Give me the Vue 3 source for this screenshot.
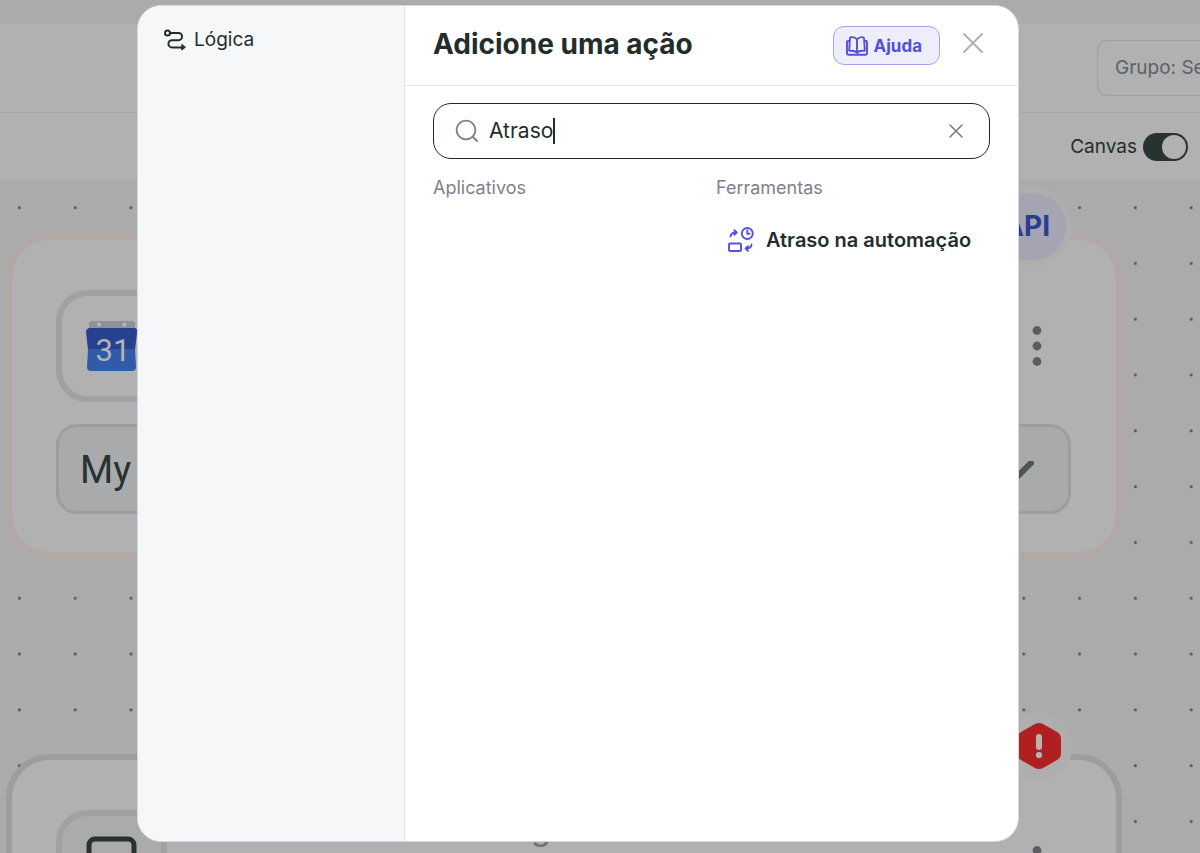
<template>
  <div class="screen">
    <div class="page">
      <header class="page-header">
        <button type="button" class="group-button">Grupo: Se</button>
      </header>

      <div class="toolbar">
        <label class="toggle">
          Canvas
          <input v-model="canvasMode" type="checkbox" class="switch" />
        </label>
      </div>

      <main class="canvas">
        <svg class="dots" aria-hidden="true">
          <defs>
            <pattern id="dots" width="55.8" height="55.8" patternUnits="userSpaceOnUse">
              <circle cx="19.4" cy="27.6" r="1.5" fill="#4e535c" />
            </pattern>
          </defs>
          <rect width="100%" height="100%" fill="url(#dots)" />
        </svg>

        <section class="node node-api">
          <span class="badge-api">API</span>
          <div class="node-head">
            <div class="node-icon">
              <svg width="52" height="52" viewBox="0 0 52 52">
                <path d="M3 8V4q0-3 3-3h40q3 0 3 3v4z" fill="#8f9198" />
                <circle cx="13" cy="4.500" r="2" fill="#b9b9b9" />
                <circle cx="38.500" cy="4.500" r="2" fill="#b9b9b9" />
                <path d="M3 8h46q3 1 2 5l-2 17H2L0 12q0-3 3-4z" fill="#28418f" />
                <path d="M2 29h47l1 18q0 4-4 4H5q-4 0-4-4z" fill="#305ba9" />
                <text x="27" y="41" text-anchor="middle" class="calendar-day">31</text>
              </svg>
            </div>
            <button type="button" class="menu" aria-label="Opções">
              <svg width="10" height="40" viewBox="0 0 10 40" fill="#5a5e62">
                <circle cx="5" cy="4.500" r="4.400" />
                <circle cx="5" cy="20" r="4.400" />
                <circle cx="5" cy="35.500" r="4.400" />
              </svg>
            </button>
          </div>
          <button type="button" class="account">
            <span>My</span>
            <svg width="32" height="18" viewBox="0 0 32 18">
              <path d="M3 2l13 13L29 2" fill="none" stroke="#4f5457" stroke-width="6" stroke-linecap="round" stroke-linejoin="round" />
            </svg>
          </button>
        </section>

        <section class="node node-alert">
          <span class="badge-alert">
            <svg width="44" height="48" viewBox="0 0 44 48">
              <path d="M18 2q4-2 8 0l14 8q4 2 4 7v14q0 5-4 7l-14 8q-4 2-8 0L4 38q-4-2-4-7V17q0-5 4-7z" fill="#b02020" />
              <rect x="19" y="12" width="6" height="16" rx="3" fill="#b9b3b3" />
              <circle cx="22" cy="33" r="3.100" fill="#b9b3b3" />
            </svg>
          </span>
          <div class="node-head">
            <div class="node-icon filled">
              <svg width="52" height="60" viewBox="0 0 52 60">
                <rect x="3" y="3" width="45" height="38" rx="6" fill="none" stroke="#283230" stroke-width="5" />
                <path d="M16 55h20" stroke="#283230" stroke-width="5" />
              </svg>
            </div>
            <span class="node-title">g</span>
            <button type="button" class="menu" aria-label="Opções">
              <svg width="10" height="40" viewBox="0 0 10 40" fill="#5a5e62">
                <circle cx="5" cy="4.500" r="4.400" />
                <circle cx="5" cy="20" r="4.400" />
                <circle cx="5" cy="35.500" r="4.400" />
              </svg>
            </button>
          </div>
        </section>
      </main>
    </div>

    <div class="overlay">
      <div class="modal" role="dialog" aria-labelledby="modal-title">
        <aside class="sidebar">
          <button type="button" class="category">
            <svg width="22" height="22" viewBox="0 0 22 22" fill="none" stroke="#232d2c" stroke-width="2" stroke-linecap="round">
              <circle cx="3.500" cy="4" r="2.500" />
              <path d="M6.500 4H14.500a3.600 3.600 0 0 1 0 7.200H8a3.600 3.600 0 0 0 0 7.200H18" />
              <path d="M17.800 15.800v5.200l3.400-2.600z" fill="#232d2c" stroke-width="1" stroke-linejoin="round" />
            </svg>
            Lógica
          </button>
        </aside>

        <div class="content">
          <div class="modal-header">
            <h1 id="modal-title">Adicione uma ação</h1>
            <button type="button" class="help">
              <svg width="22" height="20" viewBox="0 0 22 20" fill="none" stroke="#5450d6" stroke-width="1.900" stroke-linecap="round" stroke-linejoin="round">
                <path d="M11 3.500C9.500 1.500 7 .8 4.800 1.300q-.8.200-.8 1L3.200 14q0 1 1 .9 4.500-.5 6.800 2 2.300-2.500 6.800-2 1 .1 1-.9L18 2.300q0-.8-.8-1C15 .8 12.500 1.500 11 3.500zM11 3.500v13" />
                <path d="M3 5H2Q1 5 1 6v11q0 1.800 1.800 1.800h16.400Q21 18.800 21 17V6q0-1-1-1h-1" />
              </svg>
              Ajuda
            </button>
            <button type="button" class="close" aria-label="Fechar">
              <svg width="20" height="20" viewBox="0 0 20 20" fill="none" stroke="#afb1b7" stroke-width="2" stroke-linecap="round">
                <path d="M1 1l18 18M19 1L1 19" />
              </svg>
            </button>
          </div>

          <div class="search">
            <svg width="24" height="24" viewBox="0 0 24 24" fill="none" stroke="#7e808c" stroke-width="1.900" stroke-linecap="round">
              <circle cx="11" cy="11" r="9.400" />
              <path d="M18 18l4 4" />
            </svg>
            <div class="query">
              <input v-model="query" type="text" aria-label="Buscar" spellcheck="false" />
              <span class="caret"></span>
            </div>
            <button type="button" class="clear" aria-label="Limpar" @click="query = ''">
              <svg width="14" height="14" viewBox="0 0 14 14" fill="none" stroke="#777985" stroke-width="1.500" stroke-linecap="round">
                <path d="M1 1l12 12M13 1L1 13" />
              </svg>
            </button>
          </div>

          <div class="results">
            <section>
              <h2>Aplicativos</h2>
            </section>
            <section>
              <h2>Ferramentas</h2>
              <button v-for="tool in tools" :key="tool" type="button" class="tool">
                <svg width="26" height="26" viewBox="0 0 26 26" fill="none" stroke="#5350e2" stroke-width="1.900" stroke-linecap="round" stroke-linejoin="round">
                  <circle cx="19.300" cy="6.500" r="5.500" />
                  <path d="M19.300 3.500v3.200h2.200" />
                  <rect x="1" y="16.500" width="12" height="7.500" rx="1" />
                  <path d="M2.500 9.500q.5-4 5.500-4M6.300 3.300l2.500 2.200-2.500 2.200" />
                  <path d="M23.500 17.500q-.4 4-5 4M20 19.200l-2.400 2.300 2.400 2.300" />
                </svg>
                {{ tool }}
              </button>
            </section>
          </div>
        </div>
      </div>
    </div>
  </div>
</template>

<script setup>
import { ref } from 'vue'

const query = ref('Atraso')
const canvasMode = ref(true)
const tools = ['Atraso na automação']
</script>

<style>
body {
  margin: 0;
}
</style>

<style scoped>
.screen {
  position: relative;
  height: 100vh;
  overflow: hidden;
  font-family: Inter, "Liberation Sans", sans-serif;
  font-size: 19px;
  line-height: 26px;
  color: #232d2c;
}

* {
  box-sizing: border-box;
}

button {
  padding: 0;
  border: 0;
  background: none;
  font: inherit;
  color: inherit;
}

svg {
  flex: none;
  display: block;
}

.page {
  display: flex;
  flex-direction: column;
  height: 100%;
  padding-top: 24px;
  background: #ababab;
}

.page-header {
  display: flex;
  justify-content: flex-end;
  align-items: center;
  height: 89px;
  background: #b1b1b1;
  border-bottom: 1px solid #a6a6a8;
}

.group-button {
  width: 103px;
  height: 56px;
  padding-left: 17px;
  border: 1px solid #9d9ea3;
  border-right: 0;
  border-radius: 11px 0 0 11px;
  color: #5d6166;
  text-align: left;
  white-space: nowrap;
}

.toolbar {
  display: flex;
  justify-content: flex-end;
  align-items: center;
  height: 67px;
  padding-right: 12px;
  background: #b1b1b1;
}

.toggle {
  display: flex;
  align-items: center;
  gap: 6px;
}

.switch {
  appearance: none;
  display: flex;
  width: 45px;
  height: 28px;
  margin: 0;
  padding: 2px;
  border-radius: 14px;
  background: #7d8082;
}

.switch::before {
  content: "";
  width: 24px;
  height: 24px;
  border-radius: 50%;
  background: #b1b1b1;
}

.switch:checked {
  justify-content: flex-end;
  background: #283230;
}

.canvas {
  position: relative;
  flex: 1;
}

.dots {
  width: 100%;
  height: 100%;
}

/* Nodes on the free canvas */
.node {
  position: absolute;
  left: 6px;
  width: 1116px;
  height: 324px;
  padding: 50px 45px 0 44px;
  border: 6px solid #9d9d9f;
  border-radius: 44px;
  background: #b1b1b1;
}

.node-api {
  top: 54px;
  border-color: #b2a8a5;
}

.node-alert {
  top: 574px;
}

.node-head {
  display: flex;
  align-items: center;
  padding-right: 29px;
}

.node-icon {
  display: flex;
  align-items: center;
  justify-content: center;
  width: 111px;
  height: 112px;
  border: 6px solid #a0a0a5;
  border-radius: 32px;
}

.filled {
  align-items: flex-start;
  padding-top: 20px;
  background: #ababab;
}

.calendar-day {
  font: 31px Roboto, sans-serif;
  fill: #b3b3b3;
}

.node-title {
  align-self: flex-start;
  margin-left: 364px;
  font-size: 32px;
  line-height: 38px;
  color: #6d7175;
}

.menu {
  margin-left: auto;
}

.account {
  display: flex;
  align-items: center;
  justify-content: space-between;
  width: 100%;
  height: 90px;
  margin-top: 22px;
  padding: 2px 34px 0 21px;
  border: 3px solid #9c9da1;
  border-radius: 21px;
  background: #a8aaac;
  font-family: Roboto, sans-serif;
  font-size: 38px;
  line-height: 44px;
  color: #283230;
}

.badge-api {
  position: absolute;
  top: -53px;
  right: 44px;
  padding: 15px 16px 16px 28px;
  border: 6px solid #aeaeae;
  border-radius: 40px;
  background: #a4a4b2;
  font-size: 28px;
  font-weight: 700;
  line-height: 36px;
  color: #283f91;
}

.badge-alert {
  position: absolute;
  top: -48px;
  right: 43px;
  display: flex;
  align-items: center;
  justify-content: center;
  width: 68px;
  height: 68px;
  border-radius: 50%;
  background: #aeaeae;
}

/* Modal */
.overlay {
  position: absolute;
  inset: 0;
  display: flex;
  padding: 5px 181px 11px 137px;
}

.modal {
  display: flex;
  flex: 1;
  overflow: hidden;
  border: 1px solid #d5d6de;
  border-radius: 24px;
  background: #fff;
}

.sidebar {
  width: 267px;
  padding: 21px 26px;
  border-right: 1px solid #e4e5ea;
  background: #f6f7f9;
}

.category {
  display: flex;
  align-items: center;
  gap: 8px;
}

.content {
  flex: 1;
}

.modal-header {
  display: flex;
  align-items: center;
  height: 80px;
  padding: 0 35px 0 28px;
  border-bottom: 1px solid #e4e5ea;
}

h1 {
  flex: 1;
  margin: 0;
  padding-bottom: 3px;
  font-size: 28px;
  font-weight: 700;
  line-height: 36px;
}

.help {
  display: flex;
  align-items: center;
  gap: 6px;
  height: 39px;
  padding: 0 17px 0 12px;
  border: 1px solid #a5a3ec;
  border-radius: 11px;
  background: #eeeefa;
  font-size: 17px;
  font-weight: 700;
  color: #5450d6;
}

.close {
  margin-left: 23px;
  padding-bottom: 6px;
}

.search {
  display: flex;
  align-items: center;
  height: 56px;
  margin: 17px 28px 0;
  padding: 0 26px 0 21px;
  border: 1px solid #1f2726;
  border-radius: 18px;
}

.query {
  display: flex;
  align-items: center;
  flex: 1;
  margin-left: 10px;
}

.query input {
  field-sizing: content;
  padding: 0;
  border: 0;
  outline: 0;
  background: none;
  font: inherit;
  font-size: 21px;
  color: inherit;
  caret-color: transparent;
}

.caret {
  width: 2px;
  height: 26px;
  background: #232d2c;
}

.results {
  display: grid;
  grid-template-columns: 1fr 1fr;
  gap: 10px;
  padding: 16px 29px 16px 28px;
}

h2 {
  margin: 0;
  font-size: 18px;
  font-weight: 400;
  line-height: 26px;
  color: #7e808c;
}

.tool {
  display: flex;
  align-items: center;
  gap: 12px;
  margin-top: 24px;
  padding: 2px 12px;
  font-size: 20px;
  font-weight: 600;
  white-space: nowrap;
}
</style>
